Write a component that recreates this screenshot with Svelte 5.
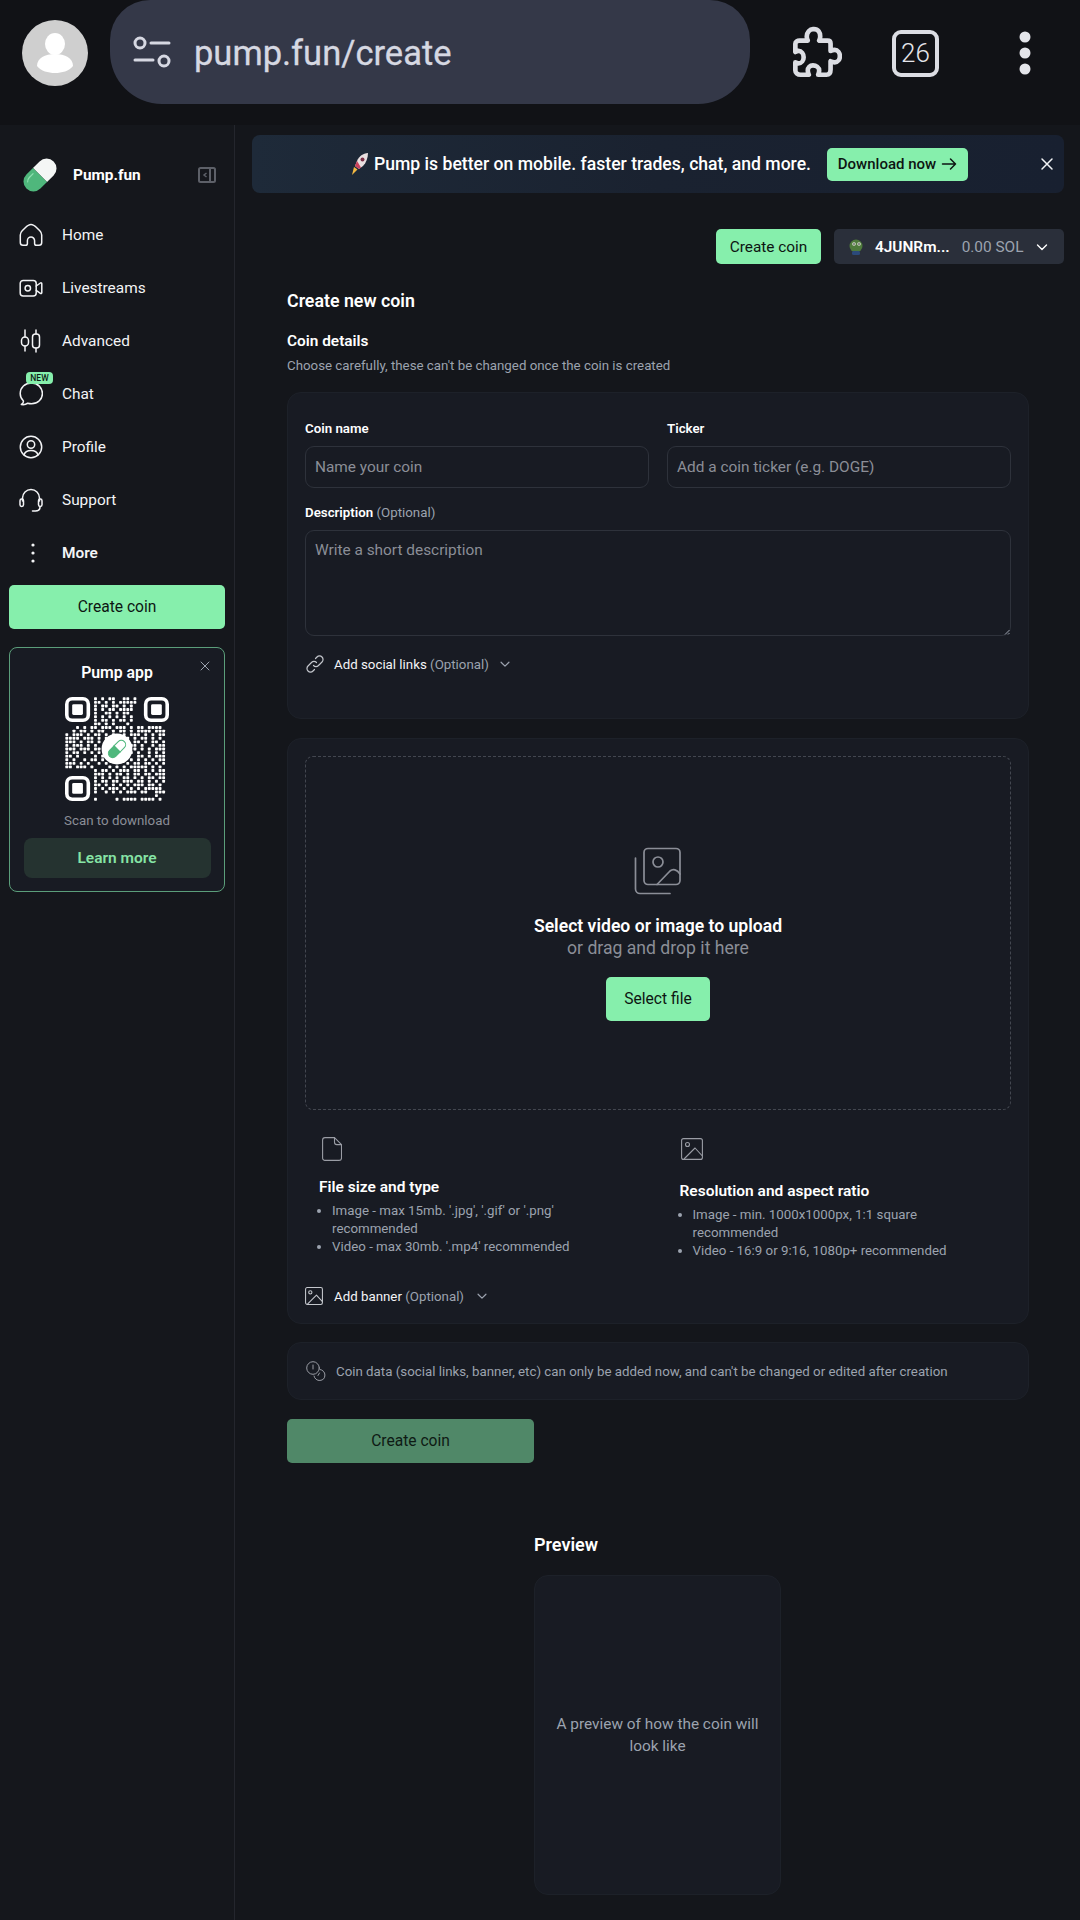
<script>
  const nav = [
    { label: "Home", icon: "home" },
    { label: "Livestreams", icon: "video" },
    { label: "Advanced", icon: "candles" },
    { label: "Chat", icon: "chat", badge: "NEW" },
    { label: "Profile", icon: "profile" },
    { label: "Support", icon: "support" }
  ];

  // rough copy of the qr dots, finder squares are drawn separately
  const qr = [
    "........1.1.11..11.1.........",
    "........11.1.1.11111.........",
    "........1.11.11.1.1..........",
    "........1.1.11.1111..........",
    "........1..11.1.11...........",
    "........1.1.1.1.1.1..........",
    "........1.11.1.11.1..........",
    "........11.1.1...1...........",
    "...1.1.11.111.111.1.11.1111..",
    "..1.11.1.11..1.11.1.1111.111",
    "1.111.1.11.1.1..1.111.1.1.11",
    "1111.111.1.1.....1.1.11.1.1.",
    "111.1.11.1.......1.11.1.11.1",
    "1.111.1.1.........11.1..1.11",
    "111.111.11.......1.1.1.1.111",
    "1.11.1.1.1.......11.1..1.1.1",
    "11.1....1.1.....1...11.1.111",
    "1.1..1.11.1.1.1...1.1.1.1.11",
    "111.1.1..1.1.....1.11.11.1.1",
    "11.111.1....1.1.1.11111.1.1.",
    "........1.11.1.111.11.1.1.11",
    "........111.1.11.1.11.11.111",
    "........1.1.1.1.11.1.1.11.11",
    "........1.11.11.111.11.1.1.1",
    "........11.1.1.1.1.111.11.1.",
    "........1.1.111.1.1.1.11111.",
    "........1..1.1.1.111.11..111",
    ".........................1..",
    "........1.....1.1111.1111.1."
  ];
  const qrDots = [];
  qr.forEach((row, y) => {
    [...row].forEach((c, x) => {
      if (c === "1") qrDots.push({ x, y });
    });
  });
</script>

{#snippet pill(size)}
  <svg width={size} height={size} viewBox="0 0 36 36">
    <g transform="rotate(45 18 18)">
      <path d="M18 1.500a8.500 8.500 0 0 1 8.500 8.500v8h-17v-8A8.500 8.500 0 0 1 18 1.500z" fill="#f4f6f5"/>
      <path d="M9.500 18h17v8a8.500 8.500 0 0 1-17 0z" fill="#4fb77c"/>
      <path d="M13 21v5a5 5 0 0 0 2 4" fill="none" stroke="#8fe0b0" stroke-width="1"/>
    </g>
  </svg>
{/snippet}

{#snippet chevron(size)}
  <svg class="chev" width={size} height={size} viewBox="0 0 16 16" fill="none" stroke="currentColor" stroke-width="1.400" stroke-linecap="round" stroke-linejoin="round"><path d="M3.500 6l4.500 4.500L12.500 6"/></svg>
{/snippet}

{#snippet navIcon(name)}
  <svg width="24" height="24" viewBox="0 0 24 24" fill="none" stroke="#f3f4f6" stroke-width="1.500" stroke-linecap="round" stroke-linejoin="round">
    {#if name === "home"}
      <path d="M12 1.500C9.500 1.500 8 3 6 5L3.200 7.800C2 9 1.300 10.300 1.300 12v7.500c0 1.800 1 2.800 2.700 2.800h2.600c1.200 0 1.800-.7 1.800-1.800v-2.800a3.600 3.600 0 0 1 7.200 0v2.800c0 1.100.6 1.800 1.800 1.800H20c1.700 0 2.700-1 2.700-2.800V12c0-1.700-.7-3-1.900-4.200L18 5c-2-2-3.500-3.500-6-3.500z"/>
    {:else if name === "video"}
      <rect x="1.200" y="4.500" width="16" height="15.500" rx="3"/><circle cx="8.800" cy="12.200" r="2.700"/><path d="M17.200 10l4.200-3c.6-.4 1.400 0 1.400.7v9c0 .7-.8 1.100-1.400.7l-4.200-3"/>
    {:else if name === "candles"}
      <path d="M6 1v7M6 17v5M17 1v4M17 19v4"/><rect x="2.500" y="8" width="7" height="9" rx="3.500"/><rect x="13.500" y="5" width="7" height="14" rx="3"/>
    {:else if name === "chat"}
      <path d="M12.500 1C6 1 1.200 5.600 1.200 11.500c0 2.900 1.200 5.400 3.100 7.200.4 1.400-.2 2.700-1.900 3.800 2.800.4 4.900-.2 6.300-1.300 1.200.3 2.500.5 3.800.5 6.300 0 10.900-4.500 10.900-10.200S18.800 1 12.500 1z"/>
    {:else if name === "profile"}
      <circle cx="12" cy="12" r="10.700"/><circle cx="12" cy="9.500" r="3.700"/><path d="M5 20c.8-2.900 3.400-4.500 7-4.500s6.200 1.600 7 4.500"/>
    {:else if name === "support"}
      <path d="M3.500 13v-3a8.500 8.500 0 0 1 17 0v3"/><rect x="1" y="11" width="3.500" height="7.500" rx="1.700"/><rect x="19.500" y="11" width="3.500" height="7.500" rx="1.700"/><path d="M21 18.500v.5c0 2.500-2 4-4.500 4h-3"/>
    {/if}
  </svg>
{/snippet}

<div class="screen">
  <header class="topbar">
    <div class="avatar">
      <svg width="66" height="66" viewBox="0 0 66 66">
        <circle cx="33" cy="33" r="33" fill="#cfcfcf"/>
        <ellipse cx="33" cy="24" rx="10" ry="11" fill="#fff"/>
        <path d="M15 46c0-8 8-12 18-12s18 4 18 12c-4 5-11 7-18 7s-14-2-18-7z" fill="#fff"/>
      </svg>
    </div>
    <div class="url">
      <svg width="40" height="34" viewBox="0 0 40 34" fill="none" stroke="#d6d8e2" stroke-width="3" stroke-linecap="round">
        <circle cx="8" cy="8" r="5"/><path d="M19 8h18M3 25h18"/><circle cx="32" cy="26" r="5"/>
      </svg>
      <span class="url-text">pump.fun/create</span>
    </div>
    <div class="chrome-icons">
      <svg width="56" height="58" viewBox="0 0 54 56" fill="none" stroke="#dcdde3" stroke-width="4.500" stroke-linejoin="round">
        <path d="M27 5c4 0 6 3 6 7 0 2-.5 3-1 4h8c2 0 3 1 3 3v7c1-.5 2-1 4-1 3 0 5 3 5 6s-2 6-5 6c-2 0-3-.5-4-1v8c0 3-1 5-4 5h-8c.5-1 1-3 1-4 0-3-3-5-6-5s-5 2-5 5c0 1 .5 3 1 4h-8c-3 0-5-2-5-4v-8c1 .5 2 1 3 1 3 0 5-3 5-6s-2-6-5-6c-1 0-2 .5-3 1v-8c0-2 2-3 4-3h8c-.5-1-1-2-1-4 0-4 3-7 6-7z"/>
      </svg>
      <div class="tabs">26</div>
      <svg class="kebab" width="14" height="44" viewBox="0 0 14 44" fill="#e4e5ea"><circle cx="7" cy="6" r="5.500"/><circle cx="7" cy="22" r="5.500"/><circle cx="7" cy="38" r="5.500"/></svg>
    </div>
  </header>

  <div class="body">
    <aside class="sidebar">
      <div class="brand">
        {@render pill(42)}
        <span class="brand-name">Pump.fun</span>
        <svg class="collapse" width="20" height="20" viewBox="0 0 20 20" fill="none" stroke="#5d6068" stroke-width="2"><rect x="2" y="3" width="16" height="14" rx="1.500"/><path d="M13 3v14"/><path d="M9.500 8l-2.500 2 2.500 2" stroke-width="1.500"/></svg>
      </div>

      <nav class="nav">
        {#each nav as item}
          <div class="nav-item">
            <span class="nav-icon">
              {@render navIcon(item.icon)}
              {#if item.badge}<span class="badge">{item.badge}</span>{/if}
            </span>
            <span>{item.label}</span>
          </div>
        {/each}
        <div class="nav-item more">
          <span class="nav-icon">
            <svg width="24" height="24" viewBox="0 0 24 24" fill="#f3f4f6"><circle cx="14" cy="4" r="1.600"/><circle cx="14" cy="12" r="1.600"/><circle cx="14" cy="20" r="1.600"/></svg>
          </span>
          <span>More</span>
        </div>
      </nav>

      <button class="btn side-create">Create coin</button>

      <div class="app-card">
        <svg class="app-close" width="12" height="12" viewBox="0 0 12 12" stroke="#9ca3af" stroke-width="1" stroke-linecap="round"><path d="M2 2l8 8M10 2l-8 8"/></svg>
        <div class="app-title">Pump app</div>
        <div class="qr">
          <svg width="104" height="104" viewBox="0 0 29 29">
            {#each qrDots as d}
              <rect x={d.x + 0.1} y={d.y + 0.1} width="0.8" height="0.8" rx="0.2" fill="#fff"/>
            {/each}
            {#each [[0, 0], [22, 0], [0, 22]] as f}
              <rect x={f[0] + 0.5} y={f[1] + 0.5} width="6" height="6" rx="1.500" fill="none" stroke="#fff" stroke-width="1"/>
              <rect x={f[0] + 2} y={f[1] + 2} width="3" height="3" rx="0.400" fill="#fff"/>
            {/each}
            <circle cx="14.500" cy="14.500" r="4.300" fill="#fff"/>
            <g transform="rotate(45 14.500 14.500)">
              <path d="M13.300 14.500v-1.700a1.200 1.200 0 0 1 2.400 0v1.700z" fill="#fff" stroke="#4fb77c" stroke-width=".3"/>
              <path d="M13.300 14.500h2.400v1.700a1.200 1.200 0 0 1-2.400 0z" fill="#4fb77c" stroke="#4fb77c" stroke-width=".3"/>
            </g>
          </svg>
        </div>
        <div class="scan">Scan to download</div>
        <button class="learn">Learn more</button>
      </div>
    </aside>

    <main class="main">
      <div class="banner">
        <svg class="rocket" width="22" height="24" viewBox="0 0 22 24">
          <path d="M20 1c-5 .5-9 3-11 8l-2 5 4 3 4-3c3-3 5-8 5-13z" fill="#e8dfe0"/>
          <path d="M9 9l-2 5 4 3 2-1.500z" fill="#c9405a"/>
          <circle cx="14.500" cy="7.500" r="2" fill="#7b2f45"/>
          <path d="M6 15l3.500 2.500L4 23z" fill="#f4b942"/>
        </svg>
        <span class="banner-text">Pump is better on mobile. faster trades, chat, and more.</span>
        <button class="btn download">
          Download now
          <svg width="16" height="14" viewBox="0 0 16 14" fill="none" stroke="#0d1512" stroke-width="1.500" stroke-linecap="round" stroke-linejoin="round"><path d="M1.500 7h13M9.500 2l5 5-5 5"/></svg>
        </button>
        <svg class="banner-close" width="14" height="14" viewBox="0 0 14 14" stroke="#f3f4f6" stroke-width="1.500" stroke-linecap="round"><path d="M2 2l10 10M12 2L2 12"/></svg>
      </div>

      <div class="actions">
        <button class="btn act-create">Create coin</button>
        <div class="wallet">
          <svg width="18" height="18" viewBox="0 0 18 18">
            <circle cx="9" cy="8" r="6.500" fill="#4e7a3c"/>
            <rect x="5" y="13" width="8" height="4" rx="1.500" fill="#2b4a7a"/>
            <circle cx="7" cy="6" r="1.800" fill="#dfe6d8"/><circle cx="12" cy="6" r="1.800" fill="#dfe6d8"/>
            <circle cx="7" cy="6" r=".8" fill="#222"/><circle cx="12" cy="6" r=".8" fill="#222"/>
          </svg>
          <span class="addr">4JUNRm...</span>
          <span class="bal">0.00 SOL</span>
          {@render chevron(16)}
        </div>
      </div>

      <section class="content">
        <h1>Create new coin</h1>
        <h2>Coin details</h2>
        <p class="sub">Choose carefully, these can't be changed once the coin is created</p>

        <div class="card details">
          <div class="two">
            <label class="field">
              <span class="lab">Coin name</span>
              <span class="input">Name your coin</span>
            </label>
            <label class="field">
              <span class="lab">Ticker</span>
              <span class="input">Add a coin ticker (e.g. DOGE)</span>
            </label>
          </div>
          <label class="field desc">
            <span class="lab">Description <em>(Optional)</em></span>
            <span class="input area">
              Write a short description
              <svg class="grip" width="6" height="6" viewBox="0 0 6 6" stroke="#9ca3af" stroke-width="1"><path d="M5.500 1L1 5.500M5.500 4L4 5.500"/></svg>
            </span>
          </label>
          <div class="toggle social">
            <svg width="20" height="20" viewBox="0 0 20 20" fill="none" stroke="#c4c7cd" stroke-width="1.200" stroke-linecap="round"><path d="M8.500 11.500a3.500 3.500 0 0 0 5 0l3.500-3.500a3.500 3.500 0 0 0-5-5l-1.500 1.500"/><path d="M11.500 8.500a3.500 3.500 0 0 0-5 0L3 12a3.500 3.500 0 0 0 5 5l1.500-1.500"/></svg>
            <span>Add social links <em>(Optional)</em></span>
            {@render chevron(14)}
          </div>
        </div>

        <div class="card media">
          <div class="drop">
            <svg width="48" height="48" viewBox="0 0 48 48" fill="none" stroke="#8b8e97" stroke-width="1.700" stroke-linecap="round" stroke-linejoin="round">
              <rect x="10" y="1.500" width="36" height="36" rx="4"/><circle cx="24" cy="15" r="5"/><path d="M23 37.500l13-13.500c3-2.500 7-1.500 10 3"/><path d="M1.500 11v31c0 2.500 2 4.500 4.500 4.500h30"/>
            </svg>
            <div class="drop-title">Select video or image to upload</div>
            <div class="drop-sub">or drag and drop it here</div>
            <button class="btn select">Select file</button>
          </div>

          <div class="info">
            <div class="info-col">
              <svg class="file-ic" width="20" height="24" viewBox="0 0 20 24" fill="none" stroke="#9a9da5" stroke-width="1.100" stroke-linejoin="round"><path d="M3 .6h9.500l7 7v13.300c0 1.400-1 2.500-2.400 2.500H3C1.600 23.400.6 22.300.6 20.900V3C.6 1.700 1.600.6 3 .6z"/><path d="M12.500.6v4.700c0 1.300 1 2.300 2.300 2.300h4.700"/></svg>
              <h3>File size and type</h3>
              <ul>
                <li>Image - max 15mb. '.jpg', '.gif' or '.png' recommended</li>
                <li>Video - max 30mb. '.mp4' recommended</li>
              </ul>
            </div>
            <div class="info-col right">
              <svg class="img-ic" width="22" height="22" viewBox="0 0 22 22" fill="none" stroke="#9a9da5" stroke-width="1.100" stroke-linejoin="round"><rect x=".6" y=".6" width="20.800" height="20.800" rx="2"/><circle cx="6.500" cy="6.500" r="2"/><path d="M3 21l11-11 7.400 8"/></svg>
              <h3>Resolution and aspect ratio</h3>
              <ul>
                <li>Image - min. 1000x1000px, 1:1 square recommended</li>
                <li>Video - 16:9 or 9:16, 1080p+ recommended</li>
              </ul>
            </div>
          </div>

          <div class="toggle banner-toggle">
            <svg width="18" height="18" viewBox="0 0 22 22" fill="none" stroke="#c4c7cd" stroke-width="1.300" stroke-linejoin="round"><rect x=".7" y=".7" width="20.600" height="20.600" rx="2"/><circle cx="6.500" cy="6.500" r="2"/><path d="M3 21l11-11 7.300 8"/></svg>
            <span>Add banner <em>(Optional)</em></span>
            {@render chevron(14)}
          </div>
        </div>

        <div class="card note">
          <svg width="21" height="20" viewBox="0 0 21 20" fill="none" stroke="#9a9da5" stroke-width="1" stroke-linecap="round"><circle cx="7" cy="7" r="6.300"/><path d="M7 4v4"/><path d="M14 8.500a5.500 5.500 0 1 1-6 6.500"/><path d="M13.500 12l-1.500 2.500"/></svg>
          <span>Coin data (social links, banner, etc) can only be added now, and can't be changed or edited after creation</span>
        </div>

        <button class="btn submit">Create coin</button>

        <div class="preview">
          <h2 class="preview-title">Preview</h2>
          <div class="card preview-card">A preview of how the coin will look like</div>
        </div>
      </section>
    </main>
  </div>
</div>

<style>
  :global(body) {
    margin: 0;
    background: #14161b;
  }

  .screen {
    width: 1080px;
    height: 1920px;
    display: flex;
    flex-direction: column;
    overflow: hidden;
    font-family: Roboto, "Liberation Sans", sans-serif;
    color: #fff;
    background: #14161b;
  }

  .topbar {
    height: 125px;
    flex: none;
    display: flex;
    align-items: flex-start;
    background: #111216;
    box-sizing: border-box;
    padding-left: 22px;
  }

  .avatar {
    margin-top: 20px;
    height: 66px;
  }

  .url {
    margin-left: 22px;
    width: 640px;
    height: 104px;
    box-sizing: border-box;
    padding-left: 22px;
    display: flex;
    align-items: center;
    gap: 22px;
    background: #343848;
    border-radius: 52px;
    border-top-left-radius: 40px;
    border-top-right-radius: 40px;
    color: #d6d8e2;
    font-size: 34.500px;
  }

  .url-text {
    padding-top: 2px;
    -webkit-text-stroke: 0.3px #d6d8e2;
  }

  .chrome-icons {
    margin-left: 36px;
    margin-top: 24px;
    display: flex;
    align-items: center;
  }

  .tabs {
    margin-left: 50px;
    width: 47px;
    height: 47px;
    box-sizing: border-box;
    border: 4.500px solid #dcdde3;
    border-radius: 9px;
    display: flex;
    align-items: center;
    justify-content: center;
    font-size: 26px;
    font-weight: 300;
    color: #e4e5ea;
  }

  .kebab {
    margin-left: 79px;
  }

  .body {
    flex: 1;
    display: flex;
    min-height: 0;
  }

  .sidebar {
    width: 235px;
    flex: none;
    box-sizing: border-box;
    border-right: 1px solid #24262d;
    padding: 30px 9px 0;
    background: #15171c;
    display: flex;
    flex-direction: column;
  }

  .brand {
    display: flex;
    align-items: center;
    padding-left: 10px;
    height: 40px;
  }

  .brand-name {
    margin-left: 12px;
    font-size: 15.400px;
    font-weight: 700;
  }

  .collapse {
    margin-left: auto;
    margin-right: 8px;
  }

  .nav {
    margin-top: 13px;
    display: flex;
    flex-direction: column;
  }

  .nav-item {
    height: 53px;
    display: flex;
    align-items: center;
    gap: 19px;
    padding-left: 10px;
    font-size: 15.400px;
    color: #f3f4f6;
  }

  .more {
    font-weight: 600;
    height: 54px;
  }

  .nav-icon {
    position: relative;
    width: 24px;
    height: 24px;
    display: block;
  }

  .badge {
    position: absolute;
    left: 7px;
    top: -10px;
    width: 27px;
    height: 12px;
    border-radius: 4px;
    background: #86efac;
    color: #0f1f17;
    font-size: 8.500px;
    font-weight: 500;
    line-height: 12px;
    text-align: center;
  }

  .btn {
    border: 0;
    background: #86efac;
    color: #0d1512;
    font-family: inherit;
    font-size: 15.600px;
    border-radius: 5px;
    padding: 0;
  }

  .side-create {
    margin-top: 5px;
    height: 44px;
    width: 216px;
    flex: none;
  }

  .app-card {
    position: relative;
    margin-top: 18px;
    width: 216px;
    height: 245px;
    box-sizing: border-box;
    border: 1px solid #5b9e7a;
    border-radius: 8px;
    padding: 15px 14px 0;
    background: #181b23;
    display: flex;
    flex-direction: column;
    align-items: center;
  }

  .app-close {
    position: absolute;
    top: 12px;
    right: 13px;
  }

  .app-title {
    font-size: 15.800px;
    font-weight: 600;
    line-height: 20px;
  }

  .qr {
    margin-top: 14px;
    height: 104px;
  }

  .scan {
    margin-top: 12px;
    font-size: 13.300px;
    line-height: 16px;
    color: #8b8e97;
  }

  .learn {
    margin-top: 9px;
    width: 187px;
    height: 40px;
    flex: none;
    border: 0;
    border-radius: 8px;
    background: #253330;
    color: #86e4a5;
    font-family: inherit;
    font-size: 15.500px;
    font-weight: 600;
  }

  .main {
    flex: 1;
    min-width: 0;
    box-sizing: border-box;
    padding: 10px 16px 0 17px;
  }

  .banner {
    position: relative;
    height: 58px;
    border-radius: 8px;
    background: linear-gradient(90deg, #1e2a39, #1a2230 50%, #182030);
    display: flex;
    align-items: center;
    justify-content: center;
    gap: 4px;
  }

  .banner-text {
    font-size: 17.600px;
    font-weight: 500;
    margin-right: 12px;
  }

  .download {
    width: 141px;
    height: 33px;
    font-size: 15px;
    font-weight: 500;
    display: flex;
    align-items: center;
    justify-content: center;
    gap: 5px;
  }

  .banner-close {
    position: absolute;
    right: 10px;
    top: 22px;
  }

  .actions {
    margin-top: 36px;
    display: flex;
    justify-content: flex-end;
    gap: 13px;
  }

  .act-create {
    width: 105px;
    height: 35px;
    font-size: 15.400px;
  }

  .wallet {
    width: 230px;
    height: 35px;
    box-sizing: border-box;
    padding: 0 13px;
    border-radius: 5px;
    background: #2a2f3a;
    display: flex;
    align-items: center;
    font-size: 15.400px;
  }

  .addr {
    margin-left: 10px;
    font-weight: 600;
  }

  .bal {
    margin-left: 12px;
    color: #9ca3af;
  }

  .wallet :global(.chev) {
    margin-left: 11px;
  }

  .content {
    padding: 0 35px;
  }

  h1 {
    margin: 25px 0 0;
    font-size: 17.800px;
    line-height: 24px;
    font-weight: 600;
  }

  h2 {
    margin: 18px 0 0;
    font-size: 15.400px;
    line-height: 20px;
    font-weight: 600;
  }

  .sub {
    margin: 5px 0 0;
    font-size: 13.300px;
    line-height: 20px;
    color: #9ca3af;
  }

  .card {
    box-sizing: border-box;
    border: 1px solid #1d2129;
    border-radius: 14px;
    background: #181b23;
  }

  .details {
    margin-top: 16px;
    height: 327px;
    padding: 27px 17px 0;
  }

  .two {
    display: grid;
    grid-template-columns: 1fr 1fr;
    gap: 18px;
  }

  .field {
    display: flex;
    flex-direction: column;
    gap: 8px;
  }

  .lab {
    font-size: 13.300px;
    line-height: 18px;
    font-weight: 600;
  }

  em {
    font-style: normal;
    font-weight: 400;
    color: #9ca3af;
  }

  .input {
    position: relative;
    height: 42px;
    box-sizing: border-box;
    border: 1.500px solid #2e323b;
    border-radius: 9px;
    padding: 0 9px;
    display: flex;
    align-items: center;
    font-size: 15.400px;
    color: #8b8e97;
    background: #181b23;
  }

  .desc {
    margin-top: 16px;
  }

  .area {
    height: 106px;
    align-items: flex-start;
    padding-top: 10px;
  }

  .grip {
    position: absolute;
    right: 0;
    bottom: 0;
  }

  .toggle {
    display: flex;
    align-items: center;
    font-size: 13.300px;
    color: #f3f4f6;
  }

  .toggle :global(.chev) {
    color: #9ca3af;
  }

  .social {
    margin-top: 18px;
    height: 20px;
    gap: 9px;
  }

  .media {
    margin-top: 19px;
    height: 586px;
    padding: 17px 17px 0;
  }

  .drop {
    height: 354px;
    box-sizing: border-box;
    border: 1px dashed #434750;
    border-radius: 8px;
    padding-top: 90px;
    display: flex;
    flex-direction: column;
    align-items: center;
  }

  .drop-title {
    margin-top: 20px;
    font-size: 17.600px;
    font-weight: 600;
    line-height: 22px;
  }

  .drop-sub {
    font-size: 17.600px;
    line-height: 22px;
    color: #8b8e97;
  }

  .select {
    margin-top: 18px;
    width: 104px;
    height: 44px;
  }

  .info {
    margin-top: 27px;
    display: grid;
    grid-template-columns: 1fr 1fr;
    padding: 0 13px 0 14px;
    height: 149px;
  }

  .info-col svg {
    display: block;
    margin-left: 3px;
  }

  .right {
    margin-left: 21px;
  }

  .right .img-ic {
    margin-left: 1px;
    margin-top: 1px;
  }

  h3 {
    margin: 16px 0 0;
    font-size: 15.500px;
    line-height: 20px;
    font-weight: 600;
  }

  .right h3 {
    margin-top: 21px;
  }

  ul {
    margin: 5px 0 0;
    padding: 0 0 0 13px;
    font-size: 13.300px;
    line-height: 18px;
    color: #9ca3af;
    width: 260px;
  }

  .right ul {
    width: 270px;
  }

  li {
    padding: 0;
    margin: 0;
  }

  .banner-toggle {
    gap: 11px;
    height: 20px;
  }

  .note {
    margin-top: 18px;
    height: 58px;
    padding: 0 18px;
    display: flex;
    align-items: center;
    gap: 9px;
    font-size: 13.300px;
    color: #9ca3af;
  }

  .submit {
    display: block;
    margin-top: 19px;
    width: 247px;
    height: 44px;
    background: #508868;
    color: #0e1a14;
  }

  .preview {
    margin-top: 70px;
    margin-left: 247px;
    width: 247px;
  }

  .preview-title {
    margin: 0;
    font-size: 18px;
    line-height: 24px;
  }

  .preview-card {
    margin-top: 18px;
    height: 320px;
    display: flex;
    align-items: center;
    justify-content: center;
    text-align: center;
    padding: 0 14px;
    font-size: 15.400px;
    line-height: 22px;
    color: #9ca3af;
  }
</style>
